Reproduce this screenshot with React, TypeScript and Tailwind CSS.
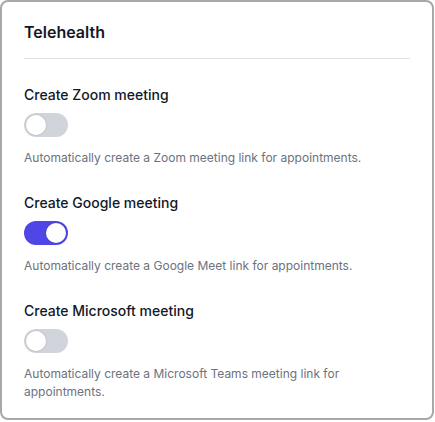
import React, { useState } from "react";

function Toggle({ on, onChange }: { on: boolean; onChange: () => void }) {
  return (
    <button
      type="button"
      onClick={onChange}
      className={
        "relative inline-flex h-6 w-11 shrink-0 items-center rounded-full " +
        (on ? "bg-[#4f46e5]" : "bg-[#d1d5db]")
      }
    >
      <span
        className={
          "inline-block h-5 w-5 rounded-full bg-white shadow-[0_0_0_1px_rgba(0,0,0,0.06)] " +
          (on ? "translate-x-[22px]" : "translate-x-[2px]")
        }
      />
    </button>
  );
}

const items = [
  {
    label: "Create Zoom meeting",
    desc: "Automatically create a Zoom meeting link for appointments.",
    on: false,
  },
  {
    label: "Create Google meeting",
    desc: "Automatically create a Google Meet link for appointments.",
    on: true,
  },
  {
    label: "Create Microsoft meeting",
    desc: "Automatically create a Microsoft Teams meeting link for appointments.",
    on: false,
  },
];

export default function App() {
  const [state, setState] = useState(items.map((i) => i.on));
  return (
    <div className="bg-white w-[435px] min-h-[422px] font-['Inter',sans-serif]">
      <div className="w-[434px] rounded-lg border-2 border-[#a8a8a8] px-[22px] pt-[18px] pb-[17px]">
        <div className="border-b border-[#e0e1e6] pb-[14px]">
          <h2 className="text-base leading-6 font-semibold text-[#111827]">Telehealth</h2>
        </div>
        <div className="flex flex-col gap-[26px] pt-[26px]">
          {items.map((it, i) => (
            <div key={it.label} className="flex flex-col">
              <div className="text-sm leading-5 font-medium text-[#111827]">{it.label}</div>
              <div className="mt-2 flex">
                <Toggle
                  on={state[i]}
                  onChange={() => setState((s) => s.map((v, j) => (j === i ? !v : v)))}
                />
              </div>
              <p className="mt-3 pr-10 text-xs leading-[18px] text-[#6b7280]">{it.desc}</p>
            </div>
          ))}
        </div>
      </div>
    </div>
  );
}
